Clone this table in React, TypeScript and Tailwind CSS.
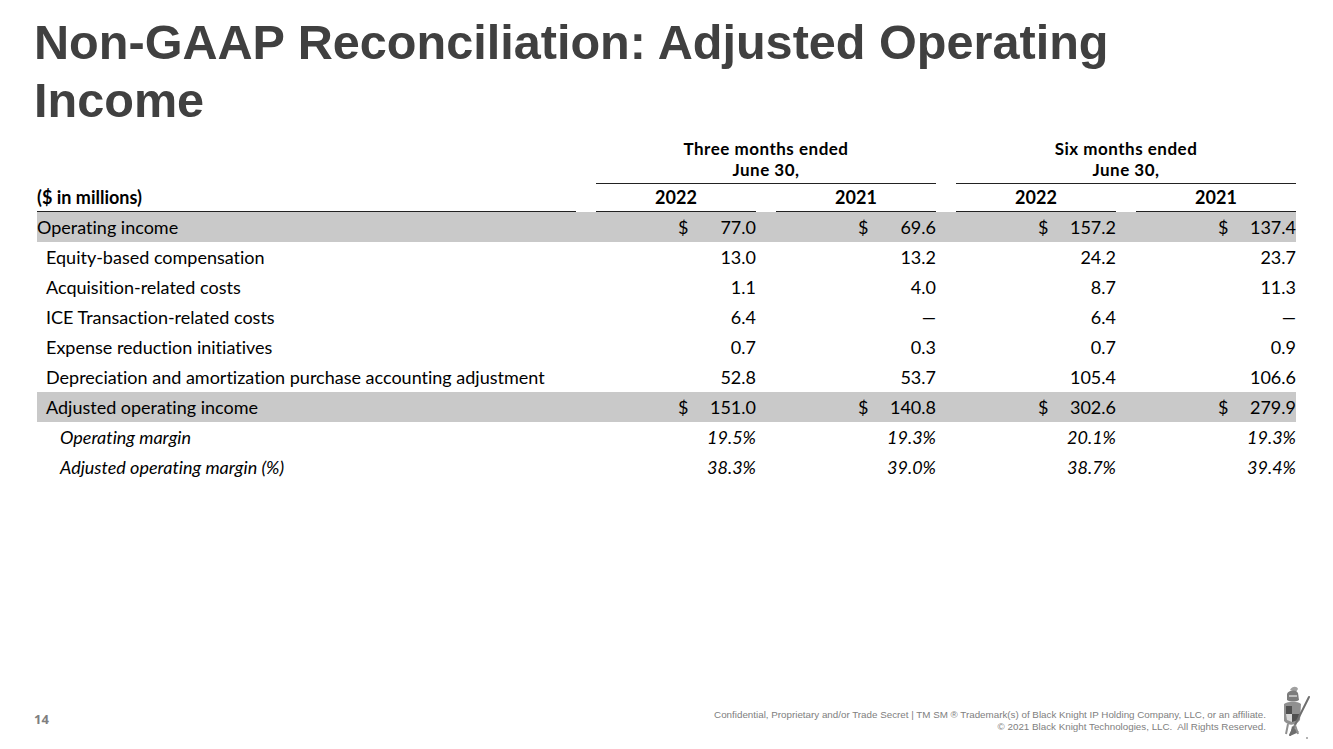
import React from "react";

type Row = {
  label: string;
  values: string[];
  kind: "band" | "plain" | "italic";
  indent: string;
  dollar?: boolean;
};

const rows: Row[] = [
  { label: "Operating income", values: ["77.0", "69.6", "157.2", "137.4"], kind: "band", indent: "pl-0", dollar: true },
  { label: "Equity-based compensation", values: ["13.0", "13.2", "24.2", "23.7"], kind: "plain", indent: "pl-[9px]" },
  { label: "Acquisition-related costs", values: ["1.1", "4.0", "8.7", "11.3"], kind: "plain", indent: "pl-[9px]" },
  { label: "ICE Transaction-related costs", values: ["6.4", "—", "6.4", "—"], kind: "plain", indent: "pl-[9px]" },
  { label: "Expense reduction initiatives", values: ["0.7", "0.3", "0.7", "0.9"], kind: "plain", indent: "pl-[9px]" },
  { label: "Depreciation and amortization purchase accounting adjustment", values: ["52.8", "53.7", "105.4", "106.6"], kind: "plain", indent: "pl-[9px]" },
  { label: "Adjusted operating income", values: ["151.0", "140.8", "302.6", "279.9"], kind: "band", indent: "pl-[9px]", dollar: true },
  { label: "Operating margin", values: ["19.5%", "19.3%", "20.1%", "19.3%"], kind: "italic", indent: "pl-[23px]" },
  { label: "Adjusted operating margin (%)", values: ["38.3%", "39.0%", "38.7%", "39.4%"], kind: "italic", indent: "pl-[23px]" },
];

const cols = "grid grid-cols-[539px_160px_160px_160px_160px] gap-x-5";

// small grey knight mark, bottom right of the slide
function KnightLogo() {
  return (
    <svg width="36" height="58" viewBox="0 0 36 58" fill="none">
      <path d="M13 5 C15 1 20 1 21 4 L19 7 Z" fill="#a0a0a0" />
      <path d="M10 9 C11 5 19 4 21 8 L22 15 C19 17 13 17 10 15 Z" fill="#7c7c7c" />
      <path d="M12 11 L20 11" stroke="#ffffff" strokeWidth="1" />
      <path d="M7 19 C11 16 21 16 24 19 L23 35 C19 41 11 41 7 36 Z" fill="#909090" />
      <path d="M9 21 L15 21 L15 29 L9 29 Z M15 29 L22 29 L21 35 L15 37 Z" fill="#505050" />
      <path d="M9 29 L15 29 L15 37 L10 35 Z" fill="#d8d8d8" />
      <path d="M32 12 L13 50" stroke="#6e6e6e" strokeWidth="2" strokeLinecap="round" />
      <path d="M15 41 L22 47 L13 51 Z" fill="#6e6e6e" />
      <path d="M11 39 L9 49 M18 40 L21 49" stroke="#909090" strokeWidth="2" />
      <circle cx="30" cy="53" r="1" fill="#9a9a9a" />
    </svg>
  );
}

export default function App() {
  return (
    <div className="w-[1333px] h-[749px] bg-white flex flex-col font-['Lato',sans-serif] [font-variant-ligatures:none] text-black overflow-hidden">
      <h1 className="mt-[13px] pl-[34px] font-['Liberation_Sans',Arial,sans-serif] font-bold text-[48.6px] leading-[58px] text-[#404040]">
        Non-GAAP Reconciliation: Adjusted Operating
        <br />
        Income
      </h1>

      <div className="mt-[9px] pl-[37px] text-[18px]">
        {/* group headers */}
        <div className={`${cols} font-bold text-[17px] leading-[21px] tracking-[0.5px]`}>
          <div />
          <div className="col-span-2 flex flex-col items-center border-b-[1.5px] border-[#222] pb-[3px]">
            <span>Three months ended</span>
            <span>June 30,</span>
          </div>
          <div className="col-span-2 flex flex-col items-center border-b-[1.5px] border-[#222] pb-[3px]">
            <span>Six months ended</span>
            <span>June 30,</span>
          </div>
        </div>

        {/* years row */}
        <div className={`${cols} font-bold h-[28px] items-center`}>
          <div className="h-full flex items-center border-b-[1.5px] border-[#222]">($ in millions)</div>
          {["2022", "2021", "2022", "2021"].map((y, i) => (
            <div key={i} className="h-full flex items-center justify-center border-b-[1.5px] border-[#222]">
              {y}
            </div>
          ))}
        </div>

        {/* body rows */}
        {rows.map((r) => (
          <div
            key={r.label}
            className={`${cols} h-[30px] items-center w-[1259px] ${r.kind === "band" ? "bg-[#c9c9c9]" : ""} ${r.kind === "italic" ? "italic" : ""}`}
          >
            <div className={r.indent}>{r.label}</div>
            {r.values.map((v, i) => (
              <div key={i} className="flex items-center">
                {r.dollar && <span className="pl-[82px]">$</span>}
                <span className="ml-auto">{v}</span>
              </div>
            ))}
          </div>
        ))}
      </div>

      <div className="mt-auto mb-[6px] flex items-end pl-[34px] pr-[20px]">
        <div className="mb-[14px] font-['Open_Sans',sans-serif] font-bold text-[13px] text-[#7f7f7f]">14</div>
        <div className="ml-auto mb-[10px] flex flex-col items-end font-['Liberation_Sans',Arial,sans-serif] text-[9.8px] leading-[12px] text-[#808080]">
          <span>Confidential, Proprietary and/or Trade Secret | TM SM ® Trademark(s) of Black Knight IP Holding Company, LLC, or an affiliate.</span>
          <span>© 2021 Black Knight Technologies, LLC.&nbsp; All Rights Reserved.</span>
        </div>
        <div className="ml-[11px]">
          <KnightLogo />
        </div>
      </div>
    </div>
  );
}
